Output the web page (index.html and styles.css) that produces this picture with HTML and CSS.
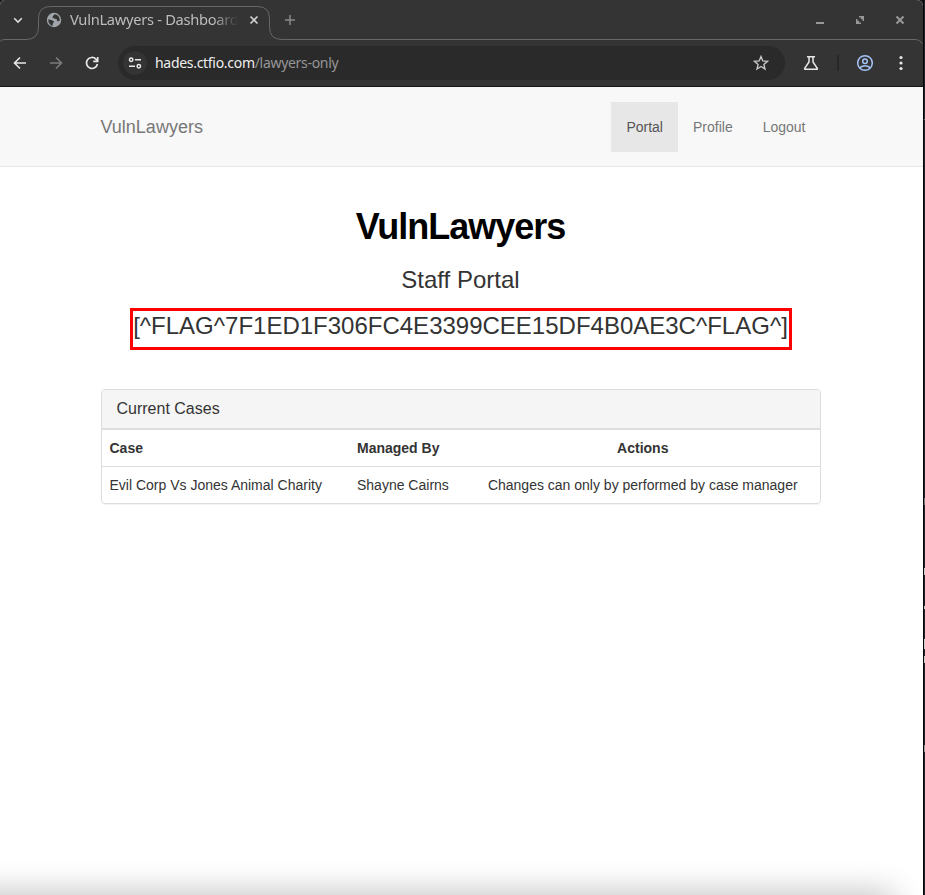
FILE: index.html
```html
<!DOCTYPE html>
<html lang="en">
<head>
<meta charset="utf-8">
<title>VulnLawyers - Dashboard</title>
<link rel="stylesheet" href="styles.css">
</head>
<body>
<div class="window">
  <header class="browser">
    <svg class="outline" width="923" height="44" viewBox="0 0 923 44" fill="none" stroke="#686868"><path d="M0 41.5Q1 39.5 5 39.5H26Q38.500 39.500 38.500 27V18.500Q38.500 6.500 50.500 6.500H257.500Q269.500 6.500 269.500 18.500V27Q269.500 39.500 282 39.500H915Q920 39.500 922.500 44"/></svg>
    <div class="tabs">
      <svg class="chev" width="12" height="12" viewBox="0 0 12 12" fill="none" stroke="#ddd" stroke-width="1.600"><path d="M2.200 4.200 6 8 9.800 4.200"/></svg>
      <svg class="globe" width="16" height="16" viewBox="0 0 16 16"><circle cx="8" cy="8" r="7.200" fill="#a0a5ac"/><path d="M2.200 7.200 6 8.200 8.200 9.600 7 11.200 6.400 13.900Q2.300 12.600 2.200 7.200ZM8.800 2.200 7.200 3.800 6.200 5.300 8.600 6.700 10.600 7 11.200 9.200 13.600 9.100Q14.300 4 9.800 2.400Z" fill="#343434"/></svg>
      <span class="tab-title">VulnLawyers - Dashboard</span>
      <svg class="tab-x" width="10" height="10" viewBox="0 0 10 10" stroke="#d0d0d0" stroke-width="1.600"><path d="m1.500 1.500 7 7m0-7-7 7"/></svg>
      <svg class="plus" width="12" height="12" viewBox="0 0 12 12" stroke="#898989" stroke-width="1.500"><path d="M6 1v10M1 6h10"/></svg>
      <div class="controls">
        <svg width="10" height="10" viewBox="0 0 10 10"><path d="M1 7h8v2H1z" fill="#989898"/></svg>
        <svg width="10" height="10" viewBox="0 0 10 10" fill="#989898"><path d="M4 1h5v5H7.500V3.700L6.700 4.500 5.500 3.300 6.300 2.500H4zM1 4h1.500v2.300l.8-.8 1.200 1.200-.8.8H6V9H1z"/></svg>
        <svg width="10" height="10" viewBox="0 0 10 10" stroke="#989898" stroke-width="2"><path d="m1.500 1.500 7 7m0-7-7 7"/></svg>
      </div>
    </div>
    <div class="toolbar">
      <svg class="nav-icon" width="14" height="14" viewBox="0 0 14 14" fill="none" stroke="#e8e8e8" stroke-width="1.600"><path d="M13 7H2M7 1.500 1.500 7 7 12.500"/></svg>
      <svg class="nav-icon" width="14" height="14" viewBox="0 0 14 14" fill="none" stroke="#7b7b7b" stroke-width="1.600"><path d="M1 7h11M7 1.500 12.500 7 7 12.500"/></svg>
      <svg class="nav-icon" width="14" height="14" viewBox="0 0 14 14" fill="none" stroke="#e8e8e8" stroke-width="1.700"><path d="M12.400 8A5.500 5.500 0 1 1 11 3.200L12.600 5M12.700 1v4.400H8.200"/></svg>
      <div class="address">
        <span class="site"><svg width="14" height="12" viewBox="0 0 14 12" fill="none" stroke="#e8e8e8" stroke-width="1.500"><circle cx="3.200" cy="2.800" r="1.700"/><path d="M7 2.800h6M1 9.200h6"/><circle cx="10.800" cy="9.200" r="1.700"/></svg></span>
        <span class="url">hades.ctfio.com<span>/lawyers-only</span></span>
        <svg class="star" width="16" height="16" viewBox="0 0 16 16" fill="none" stroke="#c5c5c5" stroke-width="1.400"><path d="m8 1.500 1.800 4.400 4.700.4-3.600 3.100 1.100 4.600L8 11.500l-4 2.500 1.100-4.600-3.600-3.100 4.700-.4z"/></svg>
      </div>
      <svg class="flask" width="16" height="16" viewBox="0 0 16 16" fill="none" stroke="#e8e8e8" stroke-width="1.500"><path d="M4 1.700h8M6 2v5L1.700 13.300q-.4 1 .6 1h11.400q1 0 .6-1L10 7V2"/></svg>
      <i class="divider"></i>
      <svg class="user" width="18" height="18" viewBox="0 0 18 18" fill="none" stroke="#a5c4f8" stroke-width="1.500"><circle cx="9" cy="9" r="7.300"/><circle cx="9" cy="7.200" r="2.300"/><path d="M3.800 13.700Q9 9.700 14.200 13.700"/></svg>
      <svg class="dots" width="4" height="16" viewBox="0 0 4 16" fill="#e8e8e8"><circle cx="2" cy="2.500" r="1.600"/><circle cx="2" cy="8" r="1.600"/><circle cx="2" cy="13.500" r="1.600"/></svg>
    </div>
  </header>
  <nav class="navbar">
    <div class="container nav-row">
      <a class="brand">VulnLawyers</a>
      <a class="link active">Portal</a>
      <a class="link">Profile</a>
      <a class="link">Logout</a>
    </div>
  </nav>
  <main class="container">
    <h1>VulnLawyers</h1>
    <h3>Staff Portal</h3>
    <h3 class="flag">[^FLAG^7F1ED1F306FC4E3399CEE15DF4B0AE3C^FLAG^]</h3>
    <section class="panel">
      <h2>Current Cases</h2>
      <table>
        <thead><tr><th class="case">Case</th><th class="manager">Managed By</th><th class="actions">Actions</th></tr></thead>
        <tbody><tr><td>Evil Corp Vs Jones Animal Charity</td><td>Shayne Cairns</td><td class="actions">Changes can only by performed by case manager</td></tr></tbody>
      </table>
    </section>
  </main>
  <div class="shade"></div>
</div>
<div class="edge"><i class="m1"></i><i class="m2"></i><i class="m3"></i><i class="m4"></i><i class="m5"></i><i class="m6"></i><i class="m7"></i></div>
</body>
</html>
```
FILE: styles.css
```css
* { box-sizing: border-box; }
body { margin: 0; width: 925px; height: 895px; overflow: hidden; display: flex; background: #14171b; font: 14px/20px "Liberation Sans", Arial, sans-serif; color: #333; }
svg { display: block; flex: none; }
.window { position: relative; width: 923px; height: 895px; background: #fff; overflow: hidden; border-radius: 5px 6px 0 0; }
.browser { position: relative; height: 87px; background: #343434; border-bottom: 1px solid #151515; font-family: "Noto Sans", sans-serif; }
.outline { position: absolute; left: 0; top: 0; }
.tabs { height: 40px; display: flex; align-items: center; padding: 0 18px 0 12px; }
.globe { margin-left: 22px; }
.tab-title { width: 168px; margin: 0 0 2px 8px; overflow: hidden; white-space: nowrap; color: #bcbcbc; font-size: 14.7px; letter-spacing: -.3px; -webkit-mask-image: linear-gradient(90deg, #000 85%, transparent); mask-image: linear-gradient(90deg, #000 85%, transparent); }
.tab-x { margin-left: 11px; }
.plus { margin-left: 25px; }
.controls { display: flex; gap: 30px; margin-left: auto; }
.toolbar { height: 46px; display: flex; align-items: center; padding-left: 13px; }
.nav-icon + .nav-icon { margin-left: 22px; }
.address { width: 667px; height: 34px; margin-left: 19px; border-radius: 17px; background: #2a2a2a; display: flex; align-items: center; padding: 0 16px 0 5px; }
.site { width: 24px; height: 24px; border-radius: 50%; background: #343434; display: flex; align-items: center; justify-content: center; }
.url { margin-left: 8px; color: #eee; font-size: 14px; letter-spacing: -.3px; white-space: nowrap; }
.url span { color: #969696; }
.star { margin-left: auto; }
.flask { margin-left: 18px; }
.divider { width: 2px; height: 16px; margin-left: 18px; background: #272727; }
.user { margin-left: 17px; }
.dots { margin-left: 25px; }
.container { width: 720px; margin: 0 auto 0 100.5px; }
.navbar { height: 80px; padding-top: 15px; background: #f8f8f8; border-bottom: 1px solid #e7e7e7; }
.nav-row { display: flex; color: #777; }
.brand { margin-right: auto; font-size: 18px; line-height: 50px; }
.link { padding: 15px; }
.link.active { background: #e7e7e7; color: #555; }
h1, h2, h3 { margin: 0; text-align: center; font-weight: 500; }
h1 { padding-top: 40px; font-size: 36px; line-height: 40px; font-weight: 700; letter-spacing: -1px; color: #000; }
h3 { margin-top: 20px; font-size: 24px; line-height: 26px; }
.flag { width: 662px; height: 42px; margin: 15px auto 0 29px; padding-top: 2px; border: 3px solid #f00; white-space: nowrap; }
.panel { margin-top: 39px; border: 1px solid #ddd; border-radius: 4px; box-shadow: 0 1px 1px rgba(0,0,0,.05); overflow: hidden; }
.panel h2 { height: 39px; padding: 10px 15px; font-size: 16px; line-height: 18px; text-align: left; background: #f5f5f5; border-bottom: 1px solid #ddd; }
table { width: 100%; border-collapse: separate; border-spacing: 0; table-layout: fixed; }
th, td { height: 37px; padding: 8px; text-align: left; border-bottom: 1px solid #ddd; white-space: nowrap; }
th { height: 38px; border-top: 1px solid #ddd; }
td { height: 36px; border-bottom: 0; }
.case { width: 247.500px; }
.manager { width: 117px; }
.actions { text-align: center; }
.shade { position: absolute; left: -60px; right: 30px; bottom: -20px; height: 20px; border-radius: 10px; box-shadow: 0 4px 34px 3px rgba(0,0,0,.32); }
.edge { position: relative; width: 2px; background: linear-gradient(90deg, #050607 50%, #20242a 50%); }
.edge i { position: absolute; left: 1px; width: 1px; height: 7px; background: #ccc; }
.edge .m1 { top: 119px; height: 1px; background: #777; }
.edge .m2 { top: 498px; background: #777; }
.edge .m3 { top: 568px; }
.edge .m4 { top: 606px; height: 3px; }
.edge .m5 { top: 639px; height: 10px; }
.edge .m6 { top: 656px; }
.edge .m7 { top: 745px; background: #999; }
```
